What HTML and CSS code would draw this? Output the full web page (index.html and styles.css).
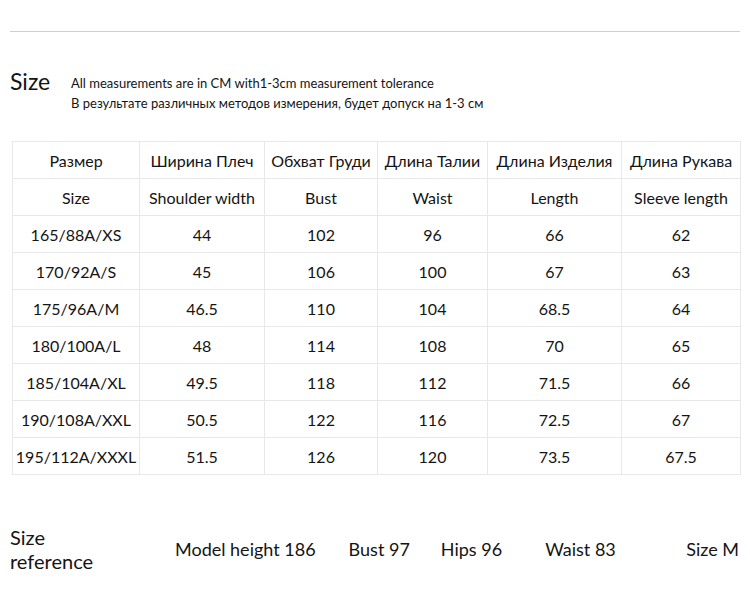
FILE: index.html
```html
<!DOCTYPE html>
<html lang="ru">
<head>
<meta charset="utf-8">
<title>Size chart</title>
<link rel="stylesheet" href="styles.css">
</head>
<body>
<div class="page">
  <div class="rule"></div>
  <div class="head">
    <div class="head-title">Size</div>
    <div class="head-notes">
      <div>All measurements are in CM with1-3cm measurement tolerance</div>
      <div>В результате различных методов измерения, будет допуск на 1-3 см</div>
    </div>
  </div>
  <table class="chart">
    <colgroup>
      <col class="c1"><col class="c2"><col class="c3"><col class="c4"><col class="c5"><col class="c6">
    </colgroup>
    <tr><td>Размер</td><td>Ширина Плеч</td><td>Обхват Груди</td><td>Длина Талии</td><td>Длина Изделия</td><td>Длина Рукава</td></tr>
    <tr><td>Size</td><td>Shoulder width</td><td>Bust</td><td>Waist</td><td>Length</td><td>Sleeve length</td></tr>
    <tr><td>165/88A/XS</td><td>44</td><td>102</td><td>96</td><td>66</td><td>62</td></tr>
    <tr><td>170/92A/S</td><td>45</td><td>106</td><td>100</td><td>67</td><td>63</td></tr>
    <tr><td>175/96A/M</td><td>46.5</td><td>110</td><td>104</td><td>68.5</td><td>64</td></tr>
    <tr><td>180/100A/L</td><td>48</td><td>114</td><td>108</td><td>70</td><td>65</td></tr>
    <tr><td>185/104A/XL</td><td>49.5</td><td>118</td><td>112</td><td>71.5</td><td>66</td></tr>
    <tr><td>190/108A/XXL</td><td>50.5</td><td>122</td><td>116</td><td>72.5</td><td>67</td></tr>
    <tr><td>195/112A/XXXL</td><td>51.5</td><td>126</td><td>120</td><td>73.5</td><td>67.5</td></tr>
  </table>
  <div class="ref">
    <div class="ref-title">Size<br>reference</div>
    <div class="ref-item ref-height">Model height 186</div>
    <div class="ref-item ref-bust">Bust 97</div>
    <div class="ref-item ref-hips">Hips 96</div>
    <div class="ref-item ref-waist">Waist 83</div>
    <div class="ref-item ref-size">Size M</div>
  </div>
</div>
</body>
</html>
```

FILE: styles.css
```css
html, body {
  margin: 0;
  padding: 0;
  background: #fff;
}
body {
  font-family: Lato, "Open Sans", "Noto Sans", sans-serif;
  color: #141414;
}
.page {
  width: 750px;
  height: 589px;
  overflow: hidden;
}
.rule {
  margin: 31px 10px 0 10px;
  border-top: 1px solid #cfcfcf;
}
.head {
  display: flex;
  align-items: flex-start;
  margin-top: 35px;
  padding-left: 10px;
}
.head-title {
  font-size: 23px;
  line-height: 28px;
  width: 61px;
}
.head-notes {
  font-size: 13px;
  line-height: 20px;
  padding-top: 6px;
}
.chart {
  margin: 28px 0 0 12px;
  border-collapse: collapse;
  table-layout: fixed;
  width: 728px;
  font-size: 16px;
}
.c1 { width: 127px; }
.c2 { width: 125px; }
.c3 { width: 113px; }
.c4 { width: 110px; }
.c5 { width: 134px; }
.c6 { width: 119px; }
.chart td {
  border: 1px solid #e8e8e8;
  height: 36px;
  padding: 0;
  text-align: center;
  vertical-align: middle;
  white-space: nowrap;
}
.ref {
  display: flex;
  align-items: center;
  margin-top: 50px;
  padding-left: 10px;
  font-size: 18px;
}
.ref-title {
  font-size: 20px;
  line-height: 24px;
  width: 165px;
}
.ref-item {
  white-space: nowrap;
  line-height: 24px;
}
.ref-bust { margin-left: 33px; }
.ref-hips { margin-left: 31px; }
.ref-waist { margin-left: 43px; }
.ref-size { margin-left: auto; margin-right: 11px; }
```
